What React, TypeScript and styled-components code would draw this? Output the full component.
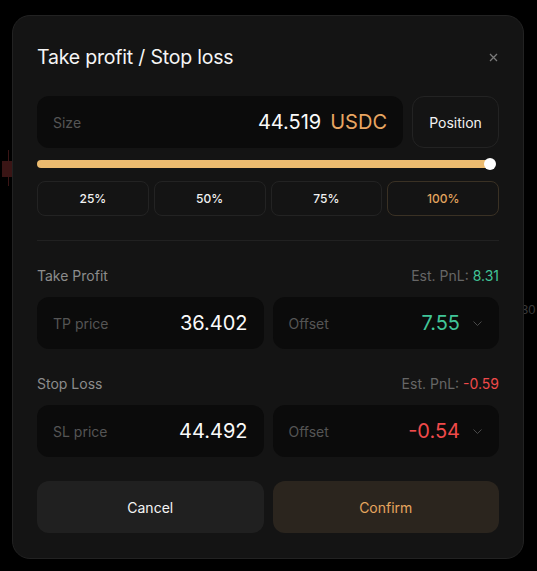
import styled, { createGlobalStyle } from "styled-components";

const GlobalStyle = createGlobalStyle`
  html, body {
    margin: 0;
    padding: 0;
    background: #000;
  }
  body {
    font-family: Inter, "Noto Sans", sans-serif;
    -webkit-font-smoothing: antialiased;
  }
`;

const Page = styled.div`
  position: relative;
  width: 537px;
  height: 571px;
  overflow: hidden;
  background: #000;
  padding: 15px 13px 0 12px;
  box-sizing: border-box;
`;

// faint trading chart behind the overlay
const Candle = styled.div<{ $color: string }>`
  position: absolute;
  width: 1px;
  background: ${p => p.$color};
  &::after {
    content: "";
    position: absolute;
    left: -6px;
    top: 30%;
    width: 13px;
    height: 45%;
    background: ${p => p.$color};
  }
`;

const AxisLabel = styled.span`
  position: absolute;
  font-family: "Liberation Sans", sans-serif;
  font-size: 13px;
  color: #3a3a3a;
`;

const Modal = styled.div`
  position: relative;
  width: 512px;
  box-sizing: border-box;
  background: #141414;
  border: 1px solid #222;
  border-radius: 18px;
  padding: 27px 24px 25px;
  display: flex;
  flex-direction: column;
`;

const Header = styled.div`
  display: flex;
  align-items: center;
  justify-content: space-between;
  height: 28px;
  margin-bottom: 25px;
`;

const Title = styled.h2`
  margin: 0;
  font-size: 19.5px;
  font-weight: 400;
  color: #f5f5f5;
  letter-spacing: -0.2px;
`;

const Close = styled.button`
  background: none;
  border: none;
  padding: 0;
  margin-right: 1px;
  display: flex;
  cursor: pointer;
`;

const SizeRow = styled.div`
  display: flex;
  gap: 9px;
  height: 52px;
`;

const Field = styled.div<{ $flex?: number }>`
  flex: ${p => p.$flex ?? 1};
  display: flex;
  align-items: center;
  background: #0b0b0b;
  border-radius: 12px;
  padding: 0 16px;
  min-width: 0;
`;

const FieldLabel = styled.span`
  font-size: 14px;
  color: #555;
  flex: 1;
`;

const Value = styled.span<{ $color?: string }>`
  font-size: 20px;
  color: ${p => p.$color ?? "#fafafa"};
`;

const Unit = styled.span`
  font-size: 20px;
  color: #e8a662;
  margin-left: 9px;
`;

const Chevron = styled.span`
  display: flex;
  margin-left: 13px;
  margin-right: 1px;
`;

const PositionButton = styled.button`
  width: 87px;
  background: transparent;
  border: 1px solid #232323;
  border-radius: 12px;
  color: #f2f2f2;
  font-family: inherit;
  font-size: 14px;
  cursor: pointer;
`;

const Slider = styled.div`
  position: relative;
  margin: 12px 9px 0 0;
  height: 8px;
  background: #ecbb6f;
  border-radius: 4px;
`;

const Thumb = styled.span`
  position: absolute;
  right: -6px;
  top: -2px;
  width: 12px;
  height: 12px;
  border-radius: 50%;
  background: #fff;
`;

const PctRow = styled.div`
  display: grid;
  grid-template-columns: repeat(4, 1fr);
  gap: 5px;
  margin-top: 13px;
`;

const PctButton = styled.button<{ $active?: boolean }>`
  height: 35px;
  background: transparent;
  border: 1px solid ${p => (p.$active ? "#3a3124" : "#232323")};
  border-radius: 8px;
  color: ${p => (p.$active ? "#e3a45e" : "#f2f2f2")};
  font-family: inherit;
  font-size: 12px;
  font-weight: 500;
  cursor: pointer;
`;

const Divider = styled.hr`
  border: none;
  height: 1px;
  background: #212121;
  margin: 24px 0 0;
`;

const SectionHead = styled.div`
  display: flex;
  align-items: center;
  justify-content: space-between;
  height: 20px;
  margin-top: 24px;
  margin-bottom: 12px;
`;

const SectionTitle = styled.span`
  font-size: 14px;
  color: #8c8c8c;
`;

const Pnl = styled.span`
  font-size: 14px;
  color: #666;
`;

const PnlValue = styled.span<{ $color: string }>`
  color: ${p => p.$color};
`;

const PriceRow = styled.div`
  display: flex;
  gap: 9px;
  height: 52px;
`;

const Actions = styled.div`
  display: grid;
  grid-template-columns: 1fr 1fr;
  gap: 9px;
  margin-top: 24px;
`;

const ActionButton = styled.button<{ $primary?: boolean }>`
  height: 52px;
  border: none;
  border-radius: 12px;
  background: ${p => (p.$primary ? "#2b251e" : "#202020")};
  color: ${p => (p.$primary ? "#e6a65e" : "#f5f5f5")};
  font-family: inherit;
  font-size: 14px;
  cursor: pointer;
`;

const GREEN = "#41c598";
const RED = "#f04a4a";

const ChevronIcon = () => (
  <svg width="9" height="5" viewBox="0 0 9 5" fill="none">
    <path d="M0.5 0.5L4.5 4.5L8.5 0.5" stroke="#4a4a4a" strokeWidth="1" />
  </svg>
);

type RowProps = {
  label: string;
  price: string;
  offset: string;
  color: string;
};

const PriceFields = ({ label, price, offset, color }: RowProps) => (
  <PriceRow>
    <Field>
      <FieldLabel>{label}</FieldLabel>
      <Value>{price}</Value>
    </Field>
    <Field>
      <FieldLabel>Offset</FieldLabel>
      <Value $color={color}>{offset}</Value>
      <Chevron>
        <ChevronIcon />
      </Chevron>
    </Field>
  </PriceRow>
);

export default function App() {
  return (
    <>
      <GlobalStyle />
      <Page>
        <Candle $color="#3a1515" style={{ left: 8, top: 150, height: 36 }} />
        <Candle $color="#10302a" style={{ left: 27, top: 152, height: 28 }} />
        <AxisLabel style={{ left: 521, top: 302 }}>30</AxisLabel>

        <Modal>
          <Header>
            <Title>Take profit / Stop loss</Title>
            <Close aria-label="Close">
              <svg width="9" height="9" viewBox="0 0 9 9">
                <path d="M1 1L8 8M8 1L1 8" stroke="#7a7a7a" strokeWidth="1.3" />
              </svg>
            </Close>
          </Header>

          <SizeRow>
            <Field>
              <FieldLabel>Size</FieldLabel>
              <Value>44.519</Value>
              <Unit>USDC</Unit>
            </Field>
            <PositionButton>Position</PositionButton>
          </SizeRow>

          <Slider>
            <Thumb />
          </Slider>

          <PctRow>
            <PctButton>25%</PctButton>
            <PctButton>50%</PctButton>
            <PctButton>75%</PctButton>
            <PctButton $active>100%</PctButton>
          </PctRow>

          <Divider />

          <SectionHead>
            <SectionTitle>Take Profit</SectionTitle>
            <Pnl>
              Est. PnL: <PnlValue $color={GREEN}>8.31</PnlValue>
            </Pnl>
          </SectionHead>
          <PriceFields label="TP price" price="36.402" offset="7.55" color={GREEN} />

          <SectionHead>
            <SectionTitle>Stop Loss</SectionTitle>
            <Pnl>
              Est. PnL: <PnlValue $color={RED}>-0.59</PnlValue>
            </Pnl>
          </SectionHead>
          <PriceFields label="SL price" price="44.492" offset="-0.54" color={RED} />

          <Actions>
            <ActionButton>Cancel</ActionButton>
            <ActionButton $primary>Confirm</ActionButton>
          </Actions>
        </Modal>
      </Page>
    </>
  );
}
